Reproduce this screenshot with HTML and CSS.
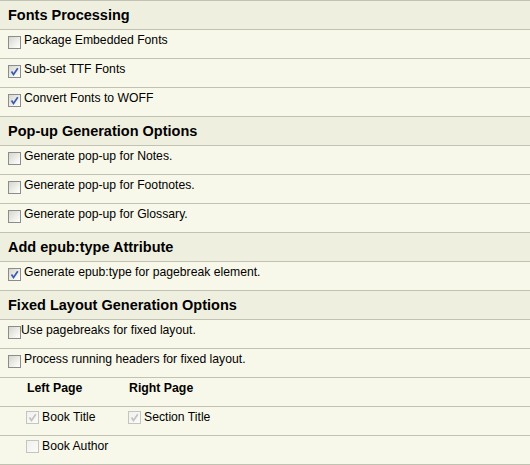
FILE: index.html
```html
<!DOCTYPE html>
<html>
<head>
<meta charset="utf-8">
<link rel="stylesheet" href="styles.css">
</head>
<body>
<div class="panel">
  <div class="row head">Fonts Processing</div>
  <div class="row item"><span class="cb"></span><span class="lbl">Package Embedded Fonts</span></div>
  <div class="row item"><span class="cb on"><svg viewBox="0 0 11 11"><path d="M2.5 5.5 L4.5 8.5 L8.8 2.3"/></svg></span><span class="lbl">Sub-set TTF Fonts</span></div>
  <div class="row item"><span class="cb on"><svg viewBox="0 0 11 11"><path d="M2.5 5.5 L4.5 8.5 L8.8 2.3"/></svg></span><span class="lbl">Convert Fonts to WOFF</span></div>

  <div class="row head">Pop-up Generation Options</div>
  <div class="row item"><span class="cb"></span><span class="lbl">Generate pop-up for Notes.</span></div>
  <div class="row item"><span class="cb"></span><span class="lbl">Generate pop-up for Footnotes.</span></div>
  <div class="row item"><span class="cb"></span><span class="lbl">Generate pop-up for Glossary.</span></div>

  <div class="row head">Add epub:type Attribute</div>
  <div class="row item"><span class="cb on"><svg viewBox="0 0 11 11"><path d="M2.5 5.5 L4.5 8.5 L8.8 2.3"/></svg></span><span class="lbl">Generate epub:type for pagebreak element.</span></div>

  <div class="row head">Fixed Layout Generation Options</div>
  <div class="row item"><span class="cb"></span><span class="lbl tight">Use pagebreaks for fixed layout.</span></div>
  <div class="row item"><span class="cb"></span><span class="lbl">Process running headers for fixed layout.</span></div>
  <div class="row item sub">
    <div class="col"><span class="subhead">Left Page</span></div>
    <div class="col"><span class="subhead">Right Page</span></div>
  </div>
  <div class="row item sub">
    <div class="col"><span class="cb dis"><svg viewBox="0 0 11 11"><path d="M2.5 5.5 L4.5 8.5 L8.8 2.3"/></svg></span><span class="lbl">Book Title</span></div>
    <div class="col"><span class="cb dis"><svg viewBox="0 0 11 11"><path d="M2.5 5.5 L4.5 8.5 L8.8 2.3"/></svg></span><span class="lbl">Section Title</span></div>
  </div>
  <div class="row item sub last">
    <div class="col"><span class="cb dis"></span><span class="lbl">Book Author</span></div>
  </div>
</div>
</body>
</html>
```

FILE: styles.css
```css
html, body {
  margin: 0;
  padding: 0;
  background: #f8f8ea;
}
.panel {
  width: 530px;
  font-family: "Liberation Sans", Arial, sans-serif;
  color: #000;
}
.row {
  height: 28px;
  border-top: 1px solid #c2c2b2;
  box-sizing: content-box;
}
.row.last {
  border-bottom: 1px solid #c2c2b2;
}
.head {
  background: #efefe0;
  font-weight: bold;
  font-size: 14.5px;
  line-height: 28px;
  padding-left: 8px;
}
.item {
  display: flex;
  align-items: flex-start;
  background: #f8f8ea;
  font-size: 12.2px;
  line-height: 20px;
  padding-left: 8px;
}
.cb {
  flex: none;
  width: 11px;
  height: 11px;
  margin-top: 6px;
  border: 1px solid #8c8c8c;
  background: linear-gradient(135deg, #d6d6d0 0%, #eeeee8 55%, #ffffff 100%);
  position: relative;
}
.cb svg {
  display: block;
  width: 11px;
  height: 11px;
}
.cb svg path {
  fill: none;
  stroke: #3a5ab0;
  stroke-width: 1.7;
}
.cb.dis {
  border-color: #c4c4c0;
  background: linear-gradient(135deg, #f0f0ec 0%, #fbfbf8 100%);
}
.cb.dis svg path {
  stroke: #c2c2c2;
}
.lbl {
  margin-left: 3px;
}
.lbl.tight {
  margin-left: 0;
}
.sub {
  padding-left: 26px;
}
.col {
  width: 102px;
  display: flex;
  align-items: flex-start;
}
.subhead {
  font-weight: bold;
  font-size: 12.3px;
  padding-left: 1px;
}
.sub .cb {
  margin-top: 4px;
}
```
